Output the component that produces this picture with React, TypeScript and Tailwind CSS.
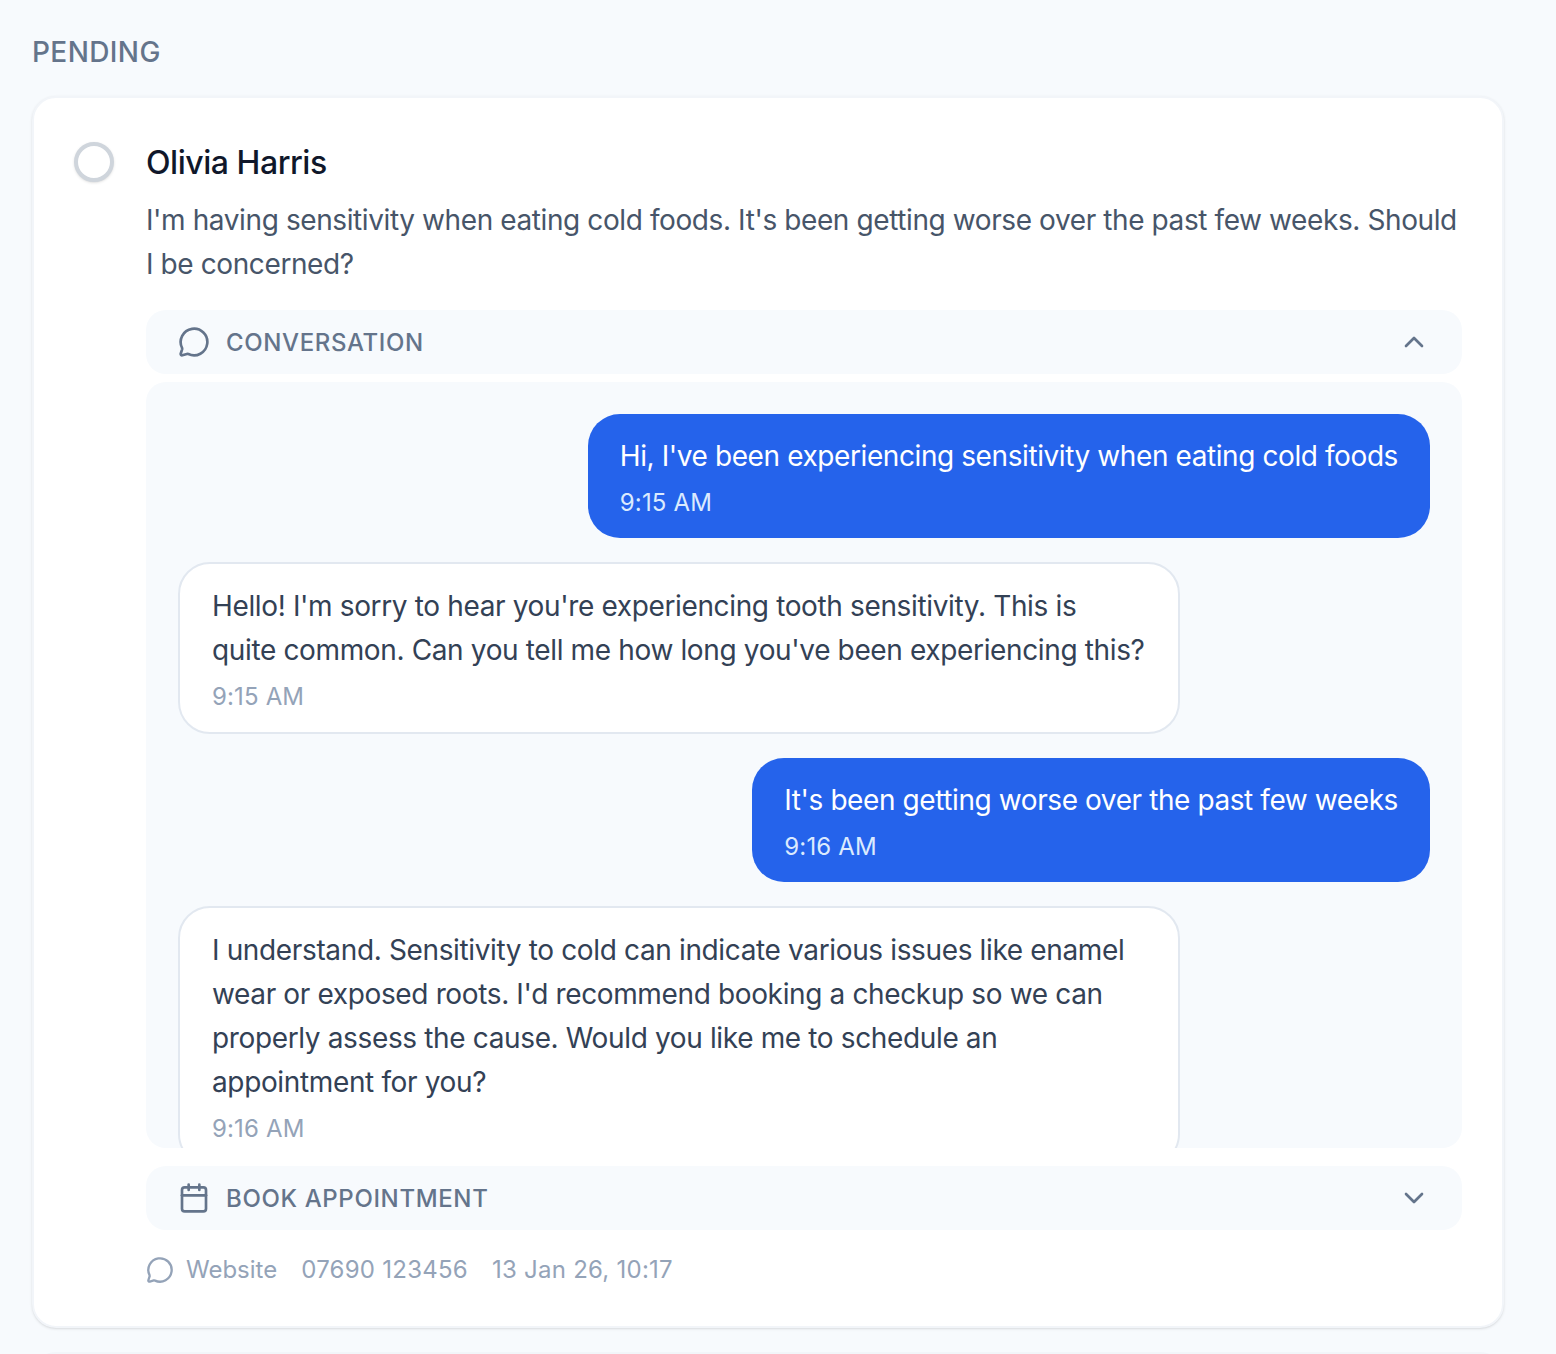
import { Calendar, ChevronDown, ChevronUp, MessageCircle } from "lucide-react";

const messages = [
  { from: "me", text: "Hi, I've been experiencing sensitivity when eating cold foods", time: "9:15 AM" },
  { from: "them", text: "Hello! I'm sorry to hear you're experiencing tooth sensitivity. This is quite common. Can you tell me how long you've been experiencing this?", time: "9:15 AM" },
  { from: "me", text: "It's been getting worse over the past few weeks", time: "9:16 AM" },
  { from: "them", text: "I understand. Sensitivity to cold can indicate various issues like enamel wear or exposed roots. I'd recommend booking a checkup so we can properly assess the cause. Would you like me to schedule an appointment for you?", time: "9:16 AM" },
];

export default function App() {
  return (
    <div className="h-[1354px] overflow-hidden bg-[#f7fafd] pt-8 pl-8 pr-[52px] font-['Inter',sans-serif]">
      <h2 className="mb-6 text-[28px] leading-10 font-medium tracking-[0.4px] text-[#64748b]">PENDING</h2>

      <div className="rounded-[24px] border-2 border-[#f2f5f9] bg-white p-10 shadow-sm">
        <div className="flex gap-8">
          <div className="mt-1 h-10 w-10 shrink-0 rounded-full border-4 border-[#cfd5dc] bg-white shadow" />

          <div className="min-w-0 flex-1">
            <h3 className="mb-[10px] text-[32px] leading-[50px] font-medium tracking-[-0.46px] text-[#0f172a]">Olivia Harris</h3>
            <p className="text-[28px] leading-[44px] tracking-[-0.4px] text-[#475569]">
              I'm having sensitivity when eating cold foods. It's been getting worse over the past few weeks. Should I be concerned?
            </p>

            <div className="mt-6 flex h-16 items-center rounded-[20px] bg-[#f7fafd] px-8 text-[#64748b]">
              <MessageCircle size={32} strokeWidth={2} />
              <span className="ml-4 flex-1 pt-[2px] text-[24px] font-medium tracking-[0.62px]">CONVERSATION</span>
              <ChevronUp size={32} strokeWidth={2} />
            </div>

            <div className="mt-2 flex h-[766px] flex-col gap-6 overflow-hidden rounded-[20px] bg-[#f7fafd] p-8">
              {messages.map((m, i) =>
                m.from === "me" ? (
                  <div key={i} className="max-w-[80%] shrink-0 self-end rounded-[32px] bg-[#2563eb] px-8 pt-5 pb-[19px] text-white">
                    <p className="text-[28px] leading-[44px] tracking-[-0.41px]">{m.text}</p>
                    <p className="mt-[9px] text-[24px] leading-8 tracking-[0.15px] text-[#dbeafe]">{m.time}</p>
                  </div>
                ) : (
                  <div key={i} className="max-w-[80%] shrink-0 self-start rounded-[32px] border-2 border-[#e2e8f0] bg-white px-8 pt-5 pb-[19px]">
                    <p className="text-[28px] leading-[44px] tracking-[-0.36px] text-[#334155]">{m.text}</p>
                    <p className="mt-[9px] text-[24px] leading-8 tracking-[0.15px] text-[#94a3b8]">{m.time}</p>
                  </div>
                )
              )}
            </div>

            <div className="mt-[18px] flex h-16 items-center rounded-[20px] bg-[#f7fafd] px-8 text-[#64748b]">
              <Calendar size={32} strokeWidth={2} />
              <span className="ml-4 flex-1 pt-[2px] text-[24px] font-medium tracking-[0.64px]">BOOK APPOINTMENT</span>
              <ChevronDown size={32} strokeWidth={2} />
            </div>

            <div className="mt-6 flex items-center gap-6 text-[24px] leading-8 text-[#94a3b8]">
              <span className="flex items-center gap-3">
                <MessageCircle size={28} strokeWidth={2} />
                Website
              </span>
              <span className="tracking-[0.25px]">07690 123456</span>
              <span className="tracking-[0.25px]">13 Jan 26, 10:17</span>
            </div>
          </div>
        </div>
      </div>

      <div className="mt-6 h-40 rounded-[24px] border-2 border-[#f2f5f9] bg-white" />
    </div>
  );
}
